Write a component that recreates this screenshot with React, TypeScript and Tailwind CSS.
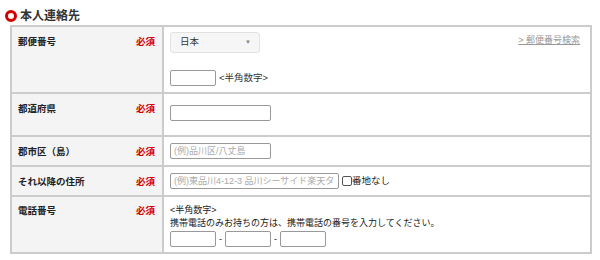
import React from "react";

const Required = () => <span className="text-[#d40000] font-bold">必須</span>;

const Label: React.FC<{ text: string; className?: string }> = ({ text, className }) => (
  <div
    className={`w-[152px] shrink-0 bg-[#f4f4f4] border-r-2 border-[#cccccc] flex justify-between pl-[6px] pr-[7px] font-bold text-[9.5px] leading-[13px] text-[#222] ${className ?? ""}`}
  >
    <span>{text}</span>
    <Required />
  </div>
);

const inputCls =
  "h-[16px] border border-[#999] rounded-[2px] bg-white px-[3px] text-[9px] text-[#333] placeholder:text-[#aaa] outline-none";

export default function App() {
  return (
    <div className="w-[600px] h-[260px] bg-white text-[#333] font-['Liberation_Sans','Noto_Sans_CJK_JP',sans-serif]">
      {/* section title */}
      <div className="flex items-center pl-[5px] pt-[7px] h-[18px] box-content">
        <span className="w-[12px] h-[12px] rounded-full border-[3px] border-[#d40000]" />
        <span className="ml-[3px] text-[12px] font-bold text-[#333] leading-[14px]">本人連絡先</span>
      </div>

      <div className="ml-[10px] w-[582px] border-2 border-[#cccccc]">
        {/* 郵便番号 */}
        <div className="flex h-[65px]">
          <Label text="郵便番号" className="pt-[8px]" />
          <div className="flex-1 pl-[6px] pt-[5px] relative">
            <div className="w-[90px] h-[21px] rounded-[3px] border border-[#e2e2e2] bg-[#f6f6f6] flex items-center justify-between pl-[9px] pr-[8px] text-[9.5px] text-[#333]">
              <span>日本</span>
              <span className="text-[6px] text-[#888]">▼</span>
            </div>
            <div className="flex items-center mt-[17px]">
              <input className={`${inputCls} w-[46px] h-[15px]`} />
              <span className="ml-[3px] text-[9.5px]">&lt;半角数字&gt;</span>
            </div>
            <a className="absolute right-[10px] top-[7px] text-[9px] text-[#999] underline">
              &gt; 郵便番号検索
            </a>
          </div>
        </div>

        {/* 都道府県 */}
        <div className="flex h-[43px] border-t-2 border-[#cccccc]">
          <Label text="都道府県" className="pt-[8px]" />
          <div className="flex-1 pl-[6px] pt-[5px]">
            <input className={`${inputCls} w-[101px]`} />
          </div>
        </div>

        {/* 郡市区（島） */}
        <div className="flex h-[30px] border-t-2 border-[#cccccc]">
          <Label text="郡市区（島）" className="items-center" />
          <div className="flex-1 pl-[6px] flex items-center">
            <input className={`${inputCls} w-[101px]`} placeholder="(例)品川区/八丈島" />
          </div>
        </div>

        {/* それ以降の住所 */}
        <div className="flex h-[30px] border-t-2 border-[#cccccc]">
          <Label text="それ以降の住所" className="items-center" />
          <div className="flex-1 pl-[6px] flex items-center">
            <input
              className={`${inputCls} w-[169px]`}
              placeholder="(例)東品川4-12-3 品川シーサイド楽天タワー"
            />
            <input
              type="checkbox"
              className="ml-[3px] appearance-none w-[10px] h-[10px] border border-[#555] rounded-[2px] bg-white"
            />
            <span className="text-[9.5px] text-[#222]">番地なし</span>
          </div>
        </div>

        {/* 電話番号 */}
        <div className="flex h-[57px] border-t-2 border-[#cccccc]">
          <Label text="電話番号" className="pt-[7px]" />
          <div className="flex-1 pl-[6px] pt-[7px] text-[9px] leading-[13px] text-[#222]">
            <div>&lt;半角数字&gt;</div>
            <div>携帯電話のみお持ちの方は、携帯電話の番号を入力してください。</div>
            <div className="flex items-center gap-[3px] mt-[1px]">
              <input className={`${inputCls} w-[46px] h-[15px]`} />
              <span>-</span>
              <input className={`${inputCls} w-[46px] h-[15px]`} />
              <span>-</span>
              <input className={`${inputCls} w-[46px] h-[15px]`} />
            </div>
          </div>
        </div>
      </div>
    </div>
  );
}
